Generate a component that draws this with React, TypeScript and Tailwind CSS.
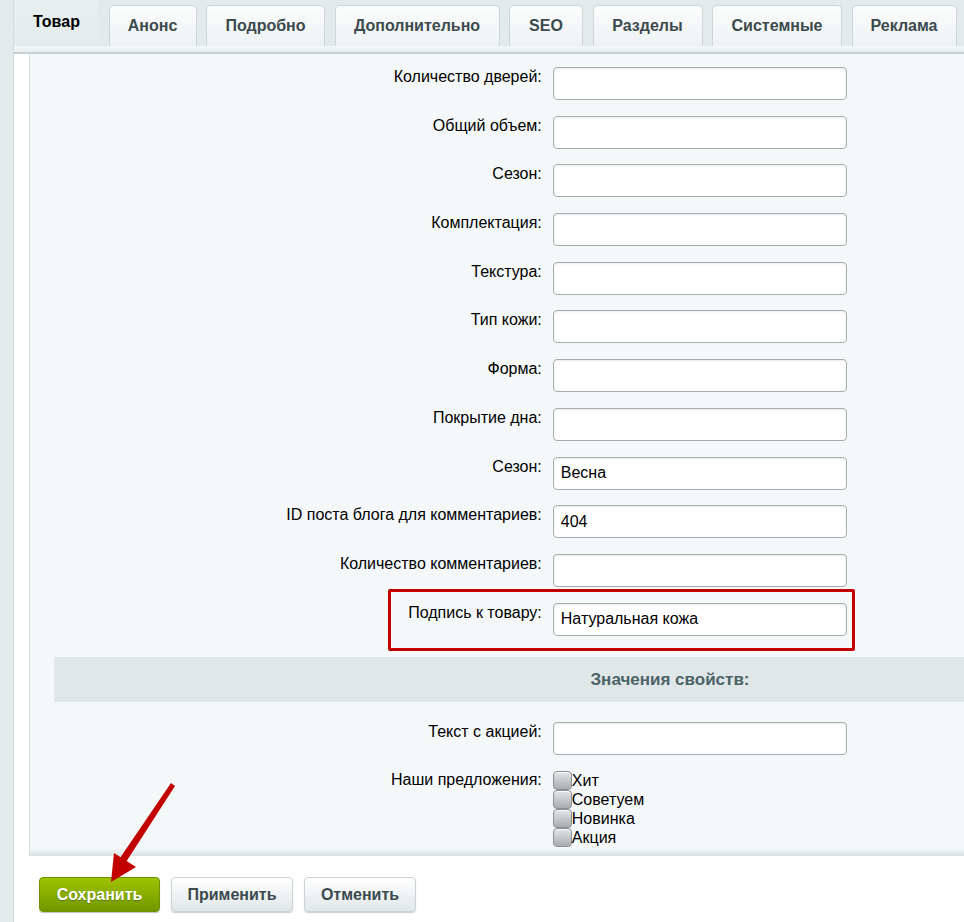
import React from 'react';

type Field = { label: string; value?: string; marked?: boolean };

const tabs = [
  { title: 'Анонс', w: 'w-[88px]' },
  { title: 'Подробно', w: 'w-[119px]' },
  { title: 'Дополнительно', w: 'w-[165px]' },
  { title: 'SEO', w: 'w-[74px]' },
  { title: 'Разделы', w: 'w-[110px]' },
  { title: 'Системные', w: 'w-[130px]' },
  { title: 'Реклама', w: 'w-[105px]' },
];

const fields: Field[] = [
  { label: 'Количество дверей:' },
  { label: 'Общий объем:' },
  { label: 'Сезон:' },
  { label: 'Комплектация:' },
  { label: 'Текстура:' },
  { label: 'Тип кожи:' },
  { label: 'Форма:' },
  { label: 'Покрытие дна:' },
  { label: 'Сезон:', value: 'Весна' },
  { label: 'ID поста блога для комментариев:', value: '404' },
  { label: 'Количество комментариев:' },
  { label: 'Подпись к товару:', value: 'Натуральная кожа', marked: true },
];

const offers = ['Хит', 'Советуем', 'Новинка', 'Акция'];

const TextInput = ({ value }: { value?: string }) => (
  <div className="flex h-[33px] w-[294px] items-center rounded-[4px] border border-[#a5adb1] bg-white px-[7px] text-[16px] text-black shadow-[inset_0_1px_2px_rgba(0,0,0,0.08)]">
    {value}
  </div>
);

const FieldRow = ({ field }: { field: Field }) => (
  <div className="relative flex h-[48.7px] pt-[5px]">
    <div className="w-[40%] pr-[5px] pt-[1px] text-right text-[16px] leading-[18px] text-black">{field.label}</div>
    <div className="w-[60%] pl-[6px]">
      <TextInput value={field.value} />
    </div>
    {field.marked && (
      <div className="pointer-events-none absolute left-[334px] top-[-9px] h-[62px] w-[467px] rounded-[2px] border-[3px] border-[#c20000]" />
    )}
  </div>
);

export default function App() {
  return (
    <div className="relative flex h-[922px] w-[964px] overflow-hidden bg-white font-['Liberation_Sans',Arial,sans-serif]">
      {/* left gutter */}
      <div className="w-[14px] shrink-0 border-r border-[#d3dcde] bg-[#e3eaec]" />

      <div className="flex min-w-0 flex-1 flex-col">
        {/* Tabs */}
        <div className="flex h-[46px] shrink-0 items-end gap-[9.5px] bg-[#e3eaec]">
          <div className="flex h-[46px] w-[85px] shrink-0 items-center justify-center bg-gradient-to-b from-[#e9eff0] to-[#e4ebed] pb-[2px] text-[16px] font-bold text-black">
            Товар
          </div>
          {tabs.map((t) => (
            <div
              key={t.title}
              className={`${t.w} flex h-[41px] shrink-0 items-center justify-center rounded-t-[5px] border border-b-0 border-[#cdd6d9] bg-gradient-to-b from-[#fbfcfc] to-[#eef2f3] text-[16px] font-bold text-[#3c4a4e]`}
            >
              {t.title}
            </div>
          ))}
        </div>
        <div className="h-[8px] shrink-0 border-b-2 border-[#c8d1d4] bg-gradient-to-b from-[#f4f7f8] to-[#e8eef0]" />

        {/* Form body */}
        <div className="flex min-h-0 flex-1">
          <div className="w-[16px] shrink-0 border-r border-[#d9e1e3] bg-white" />
          <div className="relative min-w-0 flex-1 overflow-hidden bg-[#f5f8f9] pl-[24px] pt-[8px]">
            <div className="absolute inset-x-0 bottom-0 h-[8px] bg-gradient-to-b from-[#f5f8f9] to-[#d9e1e3]" />
            <div className="relative w-[1232px]">
              {fields.map((f, i) => (
                <FieldRow key={i} field={f} />
              ))}

              <div className="mt-[11px] flex h-[45px] items-center justify-center bg-[#e0e7e8] text-[17px] font-bold text-[#4b6267]">
                Значения свойств:
              </div>

              <div className="mt-[15px]">
                <FieldRow field={{ label: 'Текст с акцией:' }} />
              </div>

              <div className="flex pt-[5px]">
                <div className="w-[40%] pr-[5px] text-right text-[16px] leading-[18px] text-black">Наши предложения:</div>
                <div className="w-[60%] pl-[6px]">
                  {offers.map((o) => (
                    <div key={o} className="flex h-[19px] items-center">
                      <span className="h-[19px] w-[19px] shrink-0 rounded-[4px] border border-[#8a9295] bg-gradient-to-b from-[#e4e6e7] to-[#a9adaf] shadow-[inset_0_1px_0_rgba(255,255,255,0.8)]" />
                      <span className="text-[16px] leading-[19px] text-black">{o}</span>
                    </div>
                  ))}
                </div>
              </div>
            </div>
          </div>
        </div>

        {/* Footer buttons */}
        <div className="flex h-[66px] shrink-0 items-start gap-[11px] bg-white pl-[25px] pt-[21px]">
          <button className="h-[35px] w-[121px] rounded-[4px] border border-[#6f9000] bg-gradient-to-b from-[#9fc300] to-[#729700] text-[16px] font-bold text-white shadow-[0_1px_1px_rgba(0,0,0,0.25)] [text-shadow:0_1px_1px_rgba(0,0,0,0.3)]">
            Сохранить
          </button>
          <button className="h-[35px] w-[122px] rounded-[4px] border border-[#c9d2d5] bg-gradient-to-b from-[#ffffff] to-[#e0e6e8] text-[16px] font-bold text-[#3c4a4e] shadow-[0_1px_1px_rgba(0,0,0,0.2)]">
            Применить
          </button>
          <button className="h-[35px] w-[112px] rounded-[4px] border border-[#c9d2d5] bg-gradient-to-b from-[#ffffff] to-[#e0e6e8] text-[16px] font-bold text-[#3c4a4e] shadow-[0_1px_1px_rgba(0,0,0,0.2)]">
            Отменить
          </button>
        </div>
      </div>

      {/* pointer arrow */}
      <svg className="pointer-events-none absolute left-0 top-0" width="964" height="922" viewBox="0 0 964 922">
        <path d="M171 783 L175 786 L126 862 L120 858 Z" fill="#c20000" />
        <path d="M111 882 L114 853 L136 867 Z" fill="#c20000" />
      </svg>
    </div>
  );
}
